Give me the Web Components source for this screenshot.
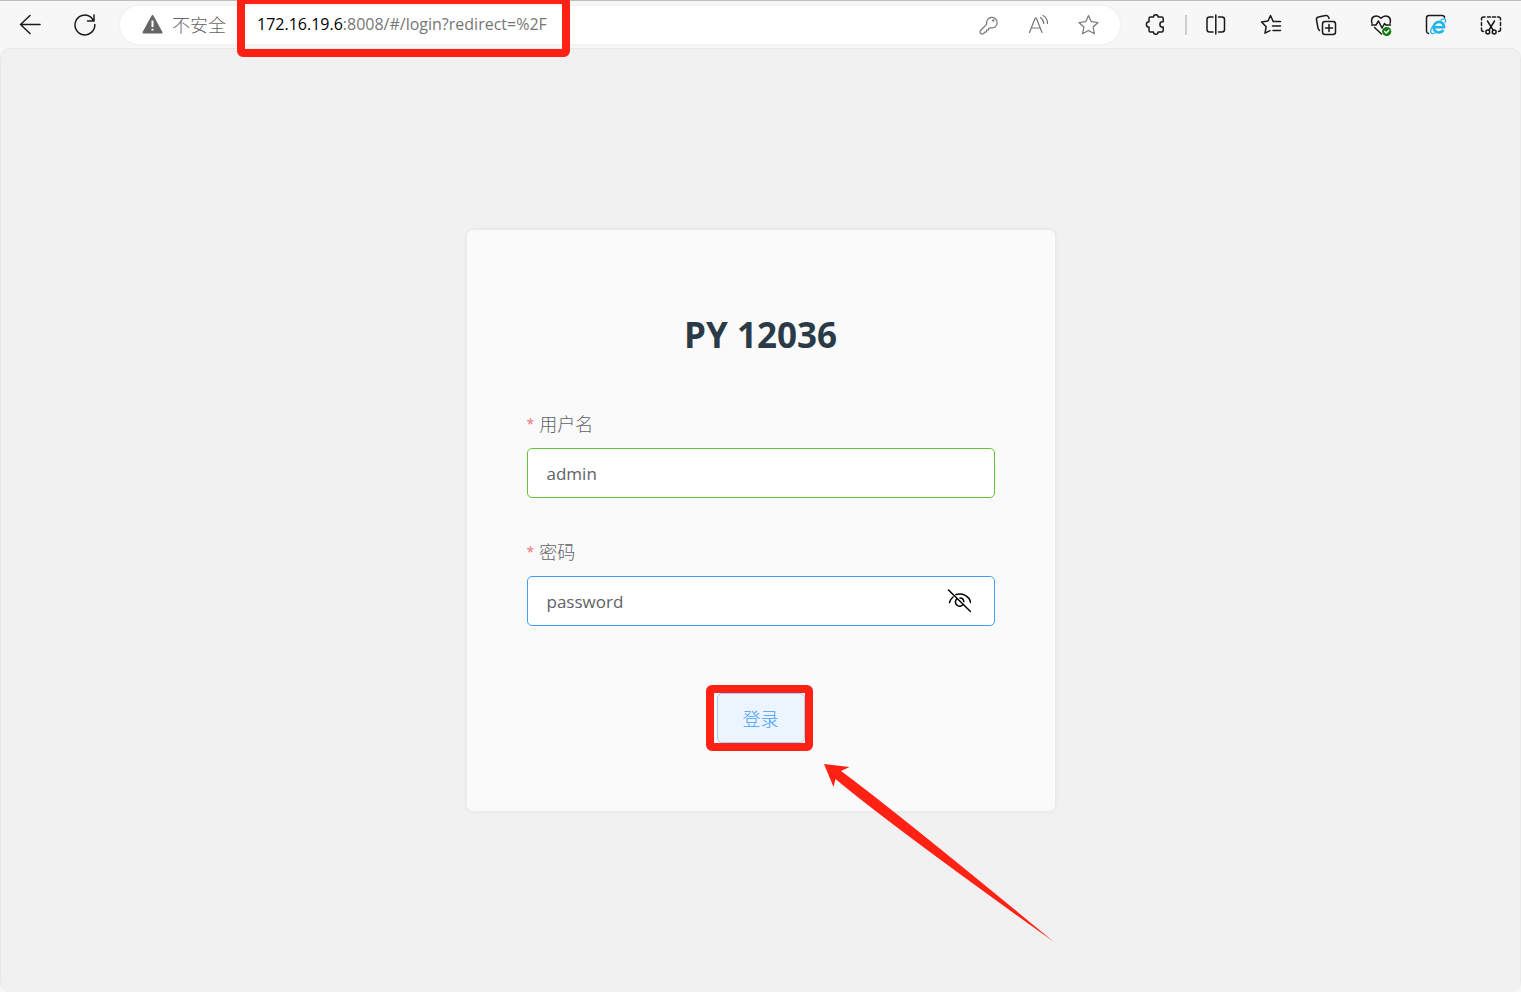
<!DOCTYPE html>
<html lang="zh-CN">
<head>
<meta charset="utf-8">
<title>PY 12036</title>
<style>
  body {
    margin: 0;
    font-family: "Open Sans", "Noto Sans CJK SC", sans-serif;
    background: #f7f7f7;
  }
</style>
</head>
<body>
<app-window></app-window>

<script>
const ICONS = {
  back: `<path d="M22 11.500H2.500M12 2.500L2.500 11.500l9.500 9"/>`,
  reload: `<path d="M21.800 11.500A9.900 9.900 0 1 1 17.500 3.800L20.500 7.500M21 2v6h-6.500"/>`,
  warning: `<path d="M12.500 3L21.500 19.500h-18z" fill="#666" stroke="#666" stroke-width="2"/><path d="M12.500 7.500v6.500M12.500 15.700v1.800" stroke="#fff" stroke-width="2" stroke-linecap="butt"/>`,
  key: `<g stroke-width="1.200"><path d="M10.800 11.200a5.300 5.300 0 1 1 3.800 3.600l-2 .7v1.500h-2v2h-2l-.7 1.500c-1.500 1-4 .5-3.900-1.700 0-.8.500-1.300 1-1.800z"/><circle cx="17.300" cy="7.500" r=".6"/></g>`,
  read: `<path d="M3.500 19.500L9.200 5h1.100L16 19.500M5.500 15h8.500M14.500 4.500q3 2 3.300 6M17 2.500q4.500 2.500 4.500 8" stroke-width="1.200"/>`,
  star: `<path d="M12.500 2.500l2.800 6.200 6.700.8-4.900 4.500 1.300 6.700-5.900-3.300L6.600 20.700l1.300-6.700L3 9.500l6.700-.8z" stroke-width="1.200"/>`,
  puzzle: `<path d="M7.500 4h3a2.300 2.300 0 0 1 4.600 0h3.600q1.500 0 1.500 1.500v3.300h-.7a2.600 2.600 0 0 0 0 5.200h.7v3.500q0 1.500-1.500 1.500h-3.600a2.300 2.300 0 0 1-4.600 0h-3q-1.500 0-1.500-1.500V14a2.600 2.600 0 0 1 0-5.200V5.500Q6 4 7.500 4z"/>`,
  split: `<path d="M9 4h-3.500q-2.500 0-2.500 2.500v10q0 2.500 2.500 2.500H9M14.500 4H18q2.500 0 2.500 2.500v10q0 2.500-2.500 2.500h-3.500M11.800 2v19"/>`,
  favorites: `<path d="M14 8L11.500 2.500 9 8l-6.500 1 4.700 4.700-1.200 6.500 5-2.500M14 8.500h7.500M13.500 13h8M14 17.500h7.500"/>`,
  collections: `<path d="M5.500 17.500q-1-1-1.500-2.500L2.500 7q-.5-2.500 2-3l7-1.500q2-.5 3 1.500l.5 1.500"/><rect x="8.500" y="8.500" width="13" height="13" rx="2.500"/><path d="M15 11.500v7M11.500 15h7"/>`,
  health: `<path d="M3 10.200Q1.500 5.500 5 3.500q4-1.500 7 1.800Q15 2 19 3.500q3.500 2 2 6.700M5.500 14.500l7 6.500M2.500 12h4.500l2.500-4 3.500 7 2.500-4.500 1.200 1.500h4.800"/><circle cx="17.700" cy="18.500" r="4.600" fill="#107c10" stroke="none"/><path d="M15.700 18.500l1.500 1.500 2.700-2.800" stroke="#fff"/>`,
  ie: `<path d="M4.500 20.500q-2-.5-2-2.500V5q0-2.500 2.500-2.500h13q2.500 0 2.500 2"/><path d="M10.500 14.200h9.700a5.300 5.300 0 1 0-.8 2.800" stroke="#1eb4ec" stroke-width="2.600" stroke-linecap="butt"/><path d="M8.500 13.500Q5.500 18.500 7.500 20.300q1.500 1 4.500-1M17 7q4.500-2.300 4.700 0 .1 1-.8 2.500" stroke="#1eb4ec" stroke-width="1.300"/>`,
  capture: `<path d="M2.500 7V6q0-2 2-2h1.500M8.500 4h3M13.500 4h3M18.500 4h1q2 0 2 2v1M21.500 9.500v3M21.500 15v1.500q0 2-2 2M2.500 9.500v3M2.500 15v1.500q0 2 2 2M8.500 8l5.500 9M15.500 8l-5.500 9"/><circle cx="8.800" cy="19" r="1.900"/><circle cx="15.200" cy="19" r="1.900"/>`,
  eyeOff: `<path d="M1.500 1l22 21.500M2.500 13.500q.8-3.200 3.500-5.500M9 5.500Q17 3.500 22 9.500q1.300 2 1.500 4M9.500 10.200a4.200 4.200 0 1 0 6.500 5.300M13 9q3.500 0 3.800 3.600"/>`,
};

function svg(name) {
  return `<svg viewBox="0 0 24 24" width="24" height="24" fill="none" stroke="currentColor" stroke-width="1.500" stroke-linecap="round" stroke-linejoin="round" aria-hidden="true">${ICONS[name]}</svg>`;
}

class IconButton extends HTMLElement {
  constructor() {
    super();
    this.attachShadow({ mode: "open" });
  }

  connectedCallback() {
    this.shadowRoot.innerHTML = `
      <style>
        :host { display: block; flex: none; }
        button {
          display: flex;
          align-items: center;
          justify-content: center;
          width: 40px;
          height: 38px;
          padding: 0;
          border: 0;
          border-radius: 4px;
          background: none;
          color: inherit;
          cursor: pointer;
        }
        svg { display: block; }
      </style>
      <button type="button" aria-label="${this.getAttribute("label")}">${svg(this.getAttribute("icon"))}</button>
    `;
  }
}

// Red frame drawn over whatever is slotted in.
class MarkBox extends HTMLElement {
  constructor() {
    super();
    this.attachShadow({ mode: "open" });
    this.shadowRoot.innerHTML = `
      <style>
        :host { display: block; position: relative; }
        .frame {
          position: absolute;
          inset: var(--mark-inset, -8px);
          border: 8px solid #ff2113;
          border-radius: 6px;
          pointer-events: none;
          z-index: 2;
        }
      </style>
      <slot></slot>
      <div class="frame"></div>
    `;
  }
}

class AddressBar extends HTMLElement {
  constructor() {
    super();
    this.attachShadow({ mode: "open" });
    this.shadowRoot.innerHTML = `
      <style>
        :host {
          display: flex;
          flex: 1;
          align-items: center;
          height: 38px;
          padding: 0 12px 0 20px;
          border-radius: 19px;
          background: #fff;
          box-shadow: 0 0 4px rgba(0, 0, 0, .05);
          color: #767676;
          white-space: nowrap;
          min-width: 0;
        }
        .security {
          display: flex;
          align-items: center;
          gap: 8px;
          margin-right: 31px;
          color: #666;
          font-size: 18px;
          font-weight: 300;
          line-height: 24px;
        }
        svg { display: block; }
        mark-box { --mark-inset: -14px -10px -18px -20px; }
        .url { width: 303px; font-size: 16px; line-height: 29px; outline: none; }
        .host { color: #000; }
        .actions { display: flex; gap: 10px; margin-left: auto; }
      </style>
      <div class="security">${svg("warning")}<span>不安全</span></div>
      <mark-box>
        <div class="url" role="textbox" tabindex="0" aria-label="地址"><span class="host">172.16.19.6</span>:8008/#/login?redirect=%2F</div>
      </mark-box>
      <div class="actions">
        <icon-button icon="key" label="密码"></icon-button>
        <icon-button icon="read" label="朗读"></icon-button>
        <icon-button icon="star" label="收藏"></icon-button>
      </div>
    `;
  }
}

class BrowserToolbar extends HTMLElement {
  constructor() {
    super();
    this.attachShadow({ mode: "open" });
    this.shadowRoot.innerHTML = `
      <style>
        :host {
          display: flex;
          align-items: center;
          gap: 15px;
          height: 48px;
          padding: 0 10px;
          box-sizing: border-box;
          border-top: 1px solid #bdbdbd;
          color: #1a1a1a;
        }
        .divider { flex: none; width: 2px; height: 20px; margin: 0 -6px 0 -5px; background: #cdcdcd; }
      </style>
      <icon-button icon="back" label="返回"></icon-button>
      <icon-button icon="reload" label="刷新"></icon-button>
      <address-bar></address-bar>
      <icon-button icon="puzzle" label="扩展"></icon-button>
      <div class="divider"></div>
      <icon-button icon="split" label="分屏"></icon-button>
      <icon-button icon="favorites" label="收藏夹"></icon-button>
      <icon-button icon="collections" label="集锦"></icon-button>
      <icon-button icon="health" label="浏览器概要"></icon-button>
      <icon-button icon="ie" label="IE 模式"></icon-button>
      <icon-button icon="capture" label="截图"></icon-button>
    `;
  }
}

class FormField extends HTMLElement {
  constructor() {
    super();
    this.attachShadow({ mode: "open" });
  }

  connectedCallback() {
    this.shadowRoot.innerHTML = `
      <style>
        :host { display: block; }
        label {
          display: flex;
          align-items: center;
          gap: 5px;
          height: 28px;
          margin-bottom: 10px;
          font-size: 18px;
          font-weight: 300;
          line-height: 28px;
          color: #606266;
        }
        .required { font-size: 14px; font-weight: 400; color: #f56c6c; }
        .box {
          display: flex;
          align-items: center;
          height: 50px;
          box-sizing: border-box;
          padding: 0 15px 0 19px;
          border: 1px solid var(--field-border, #dcdfe6);
          border-radius: 5px;
          background: #fff;
        }
        input {
          flex: 1;
          min-width: 0;
          padding: 0;
          border: 0;
          outline: none;
          background: none;
          font: inherit;
          font-size: 17px;
          color: #606266;
        }
      </style>
      <label for="field"><span class="required">*</span>${this.getAttribute("label")}</label>
      <div class="box">
        <input id="field" type="text" autocomplete="off" value="${this.getAttribute("value")}">
        <slot></slot>
      </div>
    `;
  }
}

class LoginCard extends HTMLElement {
  constructor() {
    super();
    this.attachShadow({ mode: "open" });
    this.shadowRoot.innerHTML = `
      <style>
        :host {
          display: block;
          width: 100%;
          max-width: 588px;
          box-sizing: border-box;
          padding: 80px 60px 68px;
          border-radius: 6px;
          background: #fafafa;
          box-shadow: 0 0 5px rgba(0, 0, 0, .08);
        }
        h1 {
          margin: 0 0 50px;
          font-size: 35px;
          line-height: 50px;
          text-align: center;
          color: #2b3a47;
        }
        form { display: flex; flex-direction: column; gap: 40px; }
        .user { --field-border: #67c23a; }
        .pass { --field-border: #409eff; }
        .pass icon-button { color: #000; }
        mark-box {
          align-self: center;
          margin-top: 27px;
          --mark-inset: -8px -8px -8px -11px;
        }
        .submit {
          display: block;
          height: 50px;
          padding: 0 25px;
          border: 1px solid #a0cfff;
          border-radius: 5px;
          background: #ecf5ff;
          font: inherit;
          font-size: 18px;
          font-weight: 300;
          color: #409eff;
          cursor: pointer;
        }
        .arrow { position: absolute; left: 100%; top: 100%; margin: 21px 0 0 19px; pointer-events: none; }
      </style>
      <h1>PY 12036</h1>
      <form>
        <form-field class="user" label="用户名" value="admin"></form-field>
        <form-field class="pass" label="密码" value="password">
          <icon-button icon="eyeOff" label="显示密码"></icon-button>
        </form-field>
        <mark-box>
          <button class="submit" type="submit">登录</button>
          <svg class="arrow" width="230" height="178" viewBox="0 0 230 178" aria-hidden="true">
            <path d="M0 0L25.500 3 17 7Q70 46 230 178 65 60 11.500 15L9.500 23z" fill="#ff2113"/>
          </svg>
        </mark-box>
      </form>
    `;
    this.shadowRoot.querySelector("form").addEventListener("submit", (e) => e.preventDefault());
  }
}

class AppWindow extends HTMLElement {
  constructor() {
    super();
    this.attachShadow({ mode: "open" });
    this.shadowRoot.innerHTML = `
      <style>
        :host { display: flex; flex-direction: column; min-height: 100vh; }
        main {
          flex: 1;
          display: flex;
          align-items: center;
          justify-content: center;
          border: 1px solid #e9e9e9;
          border-bottom: 0;
          border-radius: 10px;
          background: #f1f1f1;
        }
      </style>
      <browser-toolbar></browser-toolbar>
      <main><login-card></login-card></main>
    `;
  }
}

customElements.define("icon-button", IconButton);
customElements.define("mark-box", MarkBox);
customElements.define("address-bar", AddressBar);
customElements.define("browser-toolbar", BrowserToolbar);
customElements.define("form-field", FormField);
customElements.define("login-card", LoginCard);
customElements.define("app-window", AppWindow);
</script>
</body>
</html>
